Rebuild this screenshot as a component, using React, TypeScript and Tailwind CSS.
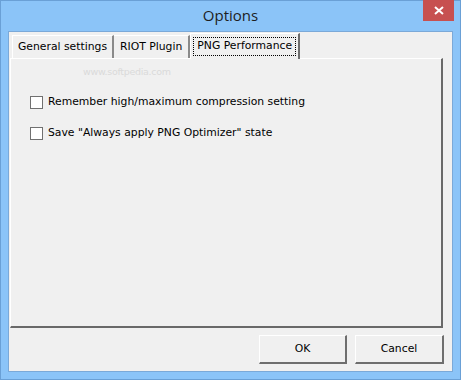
const tabFont = { fontFamily: '"DejaVu Sans", Tahoma, sans-serif' };

const Check: React.FC<{ label: string }> = ({ label }) => (
  <label className="flex items-center gap-[5px] h-[13px]">
    <span className="w-[13px] h-[13px] border border-[#707070] bg-white shrink-0" />
    <span className="text-[10.8px] text-black leading-none">{label}</span>
  </label>
);

export default function App() {
  return (
    <div
      className="w-[461px] h-[380px] bg-[#8bc4f8] flex flex-col border border-[#6aa0d6]"
      style={tabFont}
    >
      {/* title bar */}
      <div className="relative h-[30px] flex items-center justify-center">
        <span
          className="text-[15px] text-[#1e1e1e] leading-none -mt-[1px]"
          style={{ fontFamily: '"Open Sans", sans-serif' }}
        >
          Options
        </span>
        <div className="absolute right-[6px] top-[-1px] w-[31px] h-[21px] bg-[#c75050] flex items-center justify-center">
          <svg width="10" height="9" viewBox="0 0 10 9">
            <path d="M1 1 L9 8 M9 1 L1 8" stroke="#fff" strokeWidth="2" />
          </svg>
        </div>
      </div>

      {/* client */}
      <div className="flex-1 mx-[7px] mb-[7px] bg-[#f0f0f0] border border-[#7ba9d8] flex flex-col pl-[1px] pt-[1px] pr-[9px]">
        <div className="flex items-end h-[25px] pl-[2px]">
          <div className="h-[23px] px-[5px] flex items-center bg-[#f0f0f0] border-t border-l border-white border-r-2 border-r-[#8a8a8a] text-[10.8px] text-black">
            General settings
          </div>
          <div className="h-[23px] px-[6px] flex items-center bg-[#f0f0f0] border-t border-white border-r-2 border-r-[#8a8a8a] text-[10.8px] text-black">
            RIOT Plugin
          </div>
          <div className="h-[26px] -mb-[1px] px-[2px] flex items-center bg-[#f0f0f0] border-t border-l border-white border-r-2 border-r-[#6e6e6e] text-[10.8px] text-black z-10">
            <span className="border border-dotted border-black px-[3px] py-[3px] leading-none">
              PNG Performance
            </span>
          </div>
        </div>
        <div className="relative h-[270px] border-t border-l border-white border-r-2 border-b-2 border-r-[#696969] border-b-[#696969] flex flex-col pl-[19px] pt-[37px] gap-[18px]">
          <span className="absolute left-[72px] top-[6px] text-[9.5px] text-[#dadada] tracking-[-0.3px]">www.softpedia.com</span>
          <Check label="Remember high/maximum compression setting" />
          <Check label='Save "Always apply PNG Optimizer" state' />
        </div>
        <div className="flex justify-end gap-[8px] mt-[7px] -mr-[1px]">
          <button className="w-[88px] h-[29px] bg-[#f0f0f0] border-t border-l border-white border-r-2 border-b-2 border-r-[#6e6e6e] border-b-[#6e6e6e] text-[10.8px] text-black">
            OK
          </button>
          <button className="w-[89px] h-[29px] bg-[#f0f0f0] border-t border-l border-white border-r-2 border-b-2 border-r-[#6e6e6e] border-b-[#6e6e6e] text-[10.8px] text-black">
            Cancel
          </button>
        </div>
      </div>
    </div>
  );
}
